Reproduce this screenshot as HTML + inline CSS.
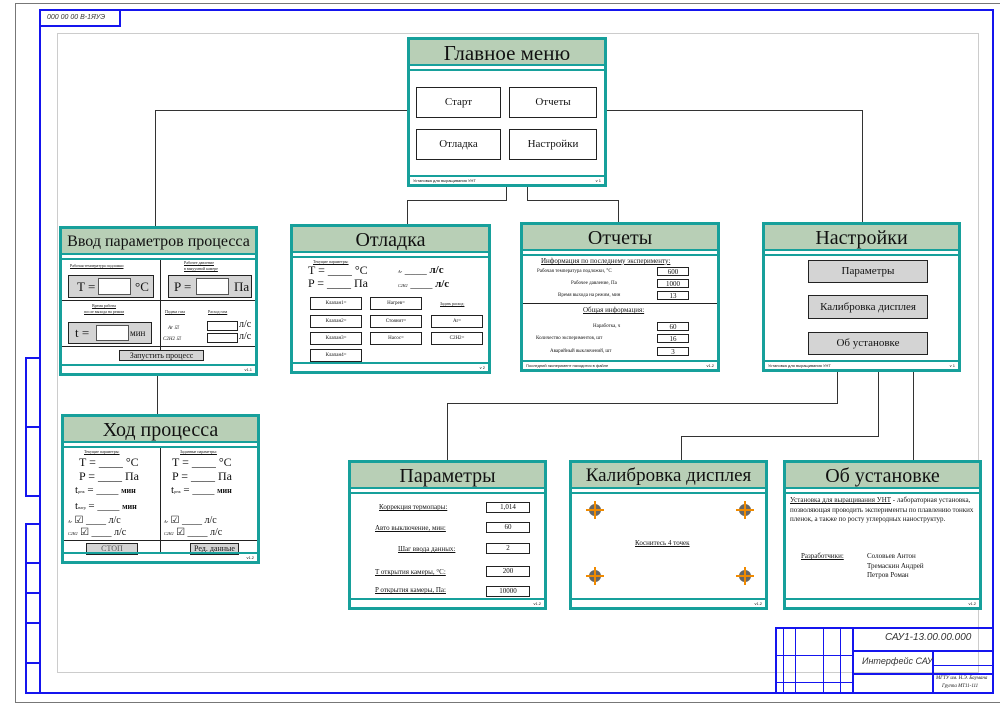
<!DOCTYPE html>
<html><head><meta charset="utf-8"><style>
*{margin:0;padding:0;box-sizing:border-box}
body{width:1000px;height:699px;background:#fff;position:relative;overflow:hidden;font-family:"Liberation Serif",serif;color:#111}
.a{position:absolute}
.p{position:absolute;border:3px solid #17a09b;background:#fff}
.p .h{position:absolute;left:0;right:0;top:0;height:26px;background:#b8cfb6;border-bottom:2px solid #17a09b;text-align:center;font-size:20px;line-height:26px;white-space:nowrap}
.p .h2{position:absolute;left:0;right:0;top:29px;height:2px;background:#17a09b}
.p .f{position:absolute;left:0;right:0;bottom:0;height:9px;border-top:2px solid #17a09b;font-size:4px;line-height:7px;padding:0 3px;font-family:"Liberation Sans",sans-serif}
.p .f span{float:right}
.b{position:absolute;border:1px solid #222;background:#fff;text-align:center;font-size:11px}
.g{background:#d4d4d4}
.t{position:absolute;font-size:6px;white-space:nowrap}
.u{text-decoration:underline}
.ln{position:absolute;background:#333}
.bl{position:absolute;border:2px solid #1515ee}
.fld{position:absolute;border:1px solid #222;background:#fff;font-size:7px;text-align:center;line-height:9px}
.dot{position:absolute;width:12px;height:12px;border-radius:6px;background:#666}
.dot:before{content:"";position:absolute;left:-3px;top:5px;width:18px;height:1.5px;background:#f08a00}
.dot:after{content:"";position:absolute;left:5px;top:-3px;width:1.5px;height:18px;background:#f08a00}
</style></head><body>
<div class="a" style="left:15px;top:3px;width:990px;height:700px;border:1px solid #777"></div>
<div class="bl" style="left:39px;top:9px;width:955px;height:685px"></div>
<div class="bl" style="left:39px;top:9px;width:82px;height:18px;font-size:7px;font-style:italic;padding-left:6px;line-height:13px;font-family:'Liberation Sans',sans-serif;color:#333">000 00 00 B-1ЯУЭ</div>
<div class="a" style="left:57px;top:33px;width:922px;height:640px;border:1px solid #ccc"></div>
<div class="bl" style="left:25px;top:357px;width:16px;height:71px"></div>
<div class="bl" style="left:25px;top:426px;width:16px;height:71px"></div>
<div class="bl" style="left:25px;top:523px;width:16px;height:41px"></div>
<div class="bl" style="left:25px;top:562px;width:16px;height:32px"></div>
<div class="bl" style="left:25px;top:592px;width:16px;height:32px"></div>
<div class="bl" style="left:25px;top:622px;width:16px;height:42px"></div>
<div class="bl" style="left:25px;top:662px;width:16px;height:32px"></div>
<div class="bl" style="left:775px;top:627px;width:219px;height:67px"></div>
<div class="ln" style="left:852px;top:627px;width:2px;height:67px;background:#1515ee"></div>
<div class="ln" style="left:852px;top:650px;width:142px;height:2px;background:#1515ee"></div>
<div class="ln" style="left:932px;top:650px;width:2px;height:44px;background:#1515ee"></div>
<div class="ln" style="left:852px;top:673px;width:142px;height:2px;background:#1515ee"></div>
<div class="ln" style="left:932px;top:665px;width:62px;height:1px;background:#1515ee"></div>
<div class="ln" style="left:775px;top:655px;width:78px;height:1px;background:#1515ee"></div>
<div class="ln" style="left:775px;top:682px;width:78px;height:1px;background:#1515ee"></div>
<div class="ln" style="left:783px;top:627px;width:1px;height:67px;background:#1515ee"></div>
<div class="ln" style="left:795px;top:627px;width:1px;height:67px;background:#1515ee"></div>
<div class="ln" style="left:823px;top:627px;width:1px;height:67px;background:#1515ee"></div>
<div class="ln" style="left:840px;top:627px;width:1px;height:67px;background:#1515ee"></div>
<div class="t" style="left:885px;top:632px;font-size:10px;font-style:italic;font-family:'Liberation Sans',sans-serif;color:#333">САУ1-13.00.00.000</div>
<div class="t" style="left:862px;top:656px;font-size:9px;font-style:italic;font-family:'Liberation Sans',sans-serif;color:#333">Интерфейс САУ</div>
<div class="t" style="left:936px;top:676px;font-size:5px;font-style:italic">МГТУ им. Н.Э. Баумана</div>
<div class="t" style="left:942px;top:684px;font-size:5px;font-style:italic">Группа МТ11-111</div>

<div class="ln" style="left:155px;top:110px;width:252px;height:1px"></div>
<div class="ln" style="left:155px;top:110px;width:1px;height:117px"></div>
<div class="ln" style="left:606px;top:110px;width:256px;height:1px"></div>
<div class="ln" style="left:862px;top:110px;width:1px;height:113px"></div>
<div class="ln" style="left:506px;top:186px;width:1px;height:14px"></div>
<div class="ln" style="left:407px;top:200px;width:100px;height:1px"></div>
<div class="ln" style="left:407px;top:200px;width:1px;height:25px"></div>
<div class="ln" style="left:527px;top:186px;width:1px;height:14px"></div>
<div class="ln" style="left:527px;top:200px;width:92px;height:1px"></div>
<div class="ln" style="left:618px;top:200px;width:1px;height:23px"></div>
<div class="ln" style="left:157px;top:375px;width:1px;height:40px"></div>
<div class="ln" style="left:837px;top:371px;width:1px;height:33px"></div>
<div class="ln" style="left:447px;top:403px;width:391px;height:1px"></div>
<div class="ln" style="left:447px;top:403px;width:1px;height:58px"></div>
<div class="ln" style="left:878px;top:371px;width:1px;height:66px"></div>
<div class="ln" style="left:681px;top:436px;width:198px;height:1px"></div>
<div class="ln" style="left:681px;top:436px;width:1px;height:25px"></div>
<div class="ln" style="left:913px;top:371px;width:1px;height:90px"></div>

<div class="p" style="left:407px;top:37px;width:200px;height:150px">
<div class="h" style="font-size:21px">Главное меню</div><div class="h2"></div>
<div class="b" style="left:6px;top:47px;width:85px;height:31px;line-height:29px">Старт</div>
<div class="b" style="left:99px;top:47px;width:88px;height:31px;line-height:29px">Отчеты</div>
<div class="b" style="left:6px;top:89px;width:85px;height:31px;line-height:29px">Отладка</div>
<div class="b" style="left:99px;top:89px;width:88px;height:31px;line-height:29px">Настройки</div>
<div class="f">Установка для выращивания УНТ<span>v 1</span></div>
</div>

<div class="p" style="left:59px;top:226px;width:199px;height:150px">
<div class="h" style="font-size:16px">Ввод параметров процесса</div><div class="h2"></div>
<div class="ln" style="left:98px;top:31px;width:1px;height:96px;background:#222"></div>
<div class="ln" style="left:0;top:71px;width:193px;height:1px;background:#222"></div>
<div class="ln" style="left:0;top:117px;width:193px;height:1px;background:#222"></div>
<div class="t u" style="left:8px;top:34px;font-size:4px">Рабочая температура подложки</div>
<div class="t u" style="left:122px;top:31px;font-size:4px;line-height:6px">Рабочее давление<br>в вакуумной камере</div>
<div class="b g" style="left:6px;top:46px;width:86px;height:23px;font-size:13px;line-height:21px;text-align:left;padding-left:8px">T =<span style="position:absolute;left:29px;top:2px;width:33px;height:17px;background:#fff;border:1px solid #555"></span><span style="position:absolute;left:66px">°C</span></div>
<div class="b g" style="left:106px;top:46px;width:84px;height:23px;font-size:13px;line-height:21px;text-align:left;padding-left:5px">P =<span style="position:absolute;left:27px;top:2px;width:33px;height:17px;background:#fff;border:1px solid #555"></span><span style="position:absolute;left:65px">Па</span></div>
<div class="t u" style="left:22px;top:74px;font-size:4px;text-align:center;line-height:6px">Время работы<br>после выхода на режим</div>
<div class="b g" style="left:6px;top:93px;width:84px;height:22px;font-size:13px;line-height:20px;text-align:left;padding-left:6px">t =<span style="position:absolute;left:27px;top:2px;width:33px;height:16px;background:#fff;border:1px solid #555"></span><span style="position:absolute;left:61px;font-size:9px">мин</span></div>
<div class="t u" style="left:103px;top:80px;font-size:4px">Подача газа</div>
<div class="t u" style="left:146px;top:80px;font-size:4px">Расход газа</div>
<div class="t" style="left:106px;top:96px;font-size:5px;font-style:italic">Ar ☑</div>
<div class="t" style="left:101px;top:107px;font-size:5px;font-style:italic">C2H2 ☑</div>
<div class="fld" style="left:145px;top:92px;width:31px;height:10px"></div>
<div class="fld" style="left:145px;top:104px;width:31px;height:10px"></div>
<div class="t" style="left:177px;top:90px;font-size:10px">л/с</div>
<div class="t" style="left:177px;top:102px;font-size:10px">л/с</div>
<div class="b g" style="left:57px;top:121px;width:85px;height:11px;font-size:8px;line-height:9px">Запустить процесс</div>
<div class="f"><span>v1.1</span></div>
</div>

<div class="p" style="left:61px;top:414px;width:199px;height:150px">
<div class="h">Ход процесса</div><div class="h2"></div>
<div class="ln" style="left:96px;top:31px;width:1px;height:106px;background:#222"></div>
<div class="ln" style="left:0;top:123px;width:193px;height:1px;background:#222"></div>
<div class="t u" style="left:20px;top:32px;font-size:4px">Текущие параметры:</div>
<div class="t u" style="left:116px;top:32px;font-size:4px">Заданные параметры:</div>
<div class="t" style="left:15px;top:38px;font-size:12px;line-height:14px">T = ____ °C<br>P = ____ Па</div>
<div class="t" style="left:108px;top:38px;font-size:12px;line-height:14px">T = ____ °C<br>P = ____ Па</div>
<div class="t" style="left:11px;top:67px;font-size:11px">t<span style="font-size:4px">реж</span> = ____ <b style="font-size:8px">мин</b></div>
<div class="t" style="left:11px;top:83px;font-size:11px">t<span style="font-size:4px">нагр</span> = ____ <b style="font-size:8px">мин</b></div>
<div class="t" style="left:107px;top:67px;font-size:11px">t<span style="font-size:4px">реж</span> = ____ <b style="font-size:8px">мин</b></div>
<div class="t" style="left:4px;top:98px;font-size:10px;line-height:11px"><i style="font-size:4px">Ar</i> ☑ ____ л/с<br><i style="font-size:4px">C2H2</i> ☑ ____ л/с</div>
<div class="t" style="left:100px;top:98px;font-size:10px;line-height:11px"><i style="font-size:4px">Ar</i> ☑ ____ л/с<br><i style="font-size:4px">C2H2</i> ☑ ____ л/с</div>
<div class="b g" style="left:22px;top:126px;width:52px;height:12px;font-size:8px;line-height:10px;color:#555">СТОП</div>
<div class="b g" style="left:126px;top:126px;width:49px;height:12px;font-size:8px;line-height:10px">Ред. данные</div>
<div class="f"><span>v1.2</span></div>
</div>

<div class="p" style="left:290px;top:224px;width:201px;height:150px">
<div class="h">Отладка</div><div class="h2"></div>
<div class="t u" style="left:20px;top:32px;font-size:4px">Текущие параметры:</div>
<div class="t" style="left:15px;top:37px;font-size:12px;line-height:13px">T = ____ °C<br>P = ____ Па</div>
<div class="t" style="left:105px;top:37px;font-size:11px;line-height:13px"><i style="font-size:4px">Ar</i> ____ <b>л/с</b><br><i style="font-size:4px">C2H2</i> ____ <b>л/с</b></div>
<div class="fld" style="left:17px;top:70px;width:52px;height:13px;font-size:5px;line-height:11px">Клапан1=</div>
<div class="fld" style="left:77px;top:70px;width:52px;height:13px;font-size:5px;line-height:11px">Нагрев=</div>
<div class="t u" style="left:147px;top:74px;font-size:4px">Задать расход:</div>
<div class="fld" style="left:17px;top:88px;width:52px;height:13px;font-size:5px;line-height:11px">Клапан2=</div>
<div class="fld" style="left:77px;top:88px;width:52px;height:13px;font-size:5px;line-height:11px">Стоянит=</div>
<div class="fld" style="left:138px;top:88px;width:52px;height:13px;font-size:5px;line-height:11px">Ar=</div>
<div class="fld" style="left:17px;top:105px;width:52px;height:13px;font-size:5px;line-height:11px">Клапан3=</div>
<div class="fld" style="left:77px;top:105px;width:52px;height:13px;font-size:5px;line-height:11px">Насос=</div>
<div class="fld" style="left:138px;top:105px;width:52px;height:13px;font-size:5px;line-height:11px">C2H2=</div>
<div class="fld" style="left:17px;top:122px;width:52px;height:13px;font-size:5px;line-height:11px">Клапан4=</div>
<div class="f"><span>v 2</span></div>
</div>

<div class="p" style="left:520px;top:222px;width:200px;height:150px">
<div class="h">Отчеты</div><div class="h2"></div>
<div class="t u" style="left:18px;top:32px;font-size:7px">Информация по последнему эксперименту:</div>
<div class="t" style="left:14px;top:44px;font-size:5px">Рабочая температура подложки, °C</div>
<div class="t" style="left:48px;top:56px;font-size:5px">Рабочее давление, Па</div>
<div class="t" style="left:35px;top:68px;font-size:5px">Время выхода на режим, мин</div>
<div class="fld" style="left:134px;top:42px;width:32px;height:9px">600</div>
<div class="fld" style="left:134px;top:54px;width:32px;height:9px">1000</div>
<div class="fld" style="left:134px;top:66px;width:32px;height:9px">13</div>
<div class="ln" style="left:0;top:78px;width:194px;height:1px;background:#222"></div>
<div class="t u" style="left:60px;top:81px;font-size:7px">Общая информация:</div>
<div class="t" style="left:70px;top:99px;font-size:5px">Наработка, ч</div>
<div class="t" style="left:13px;top:111px;font-size:5px">Количество экспериментов, шт</div>
<div class="t" style="left:27px;top:124px;font-size:5px">Аварийный выключений, шт</div>
<div class="fld" style="left:134px;top:97px;width:32px;height:9px">60</div>
<div class="fld" style="left:134px;top:109px;width:32px;height:9px">16</div>
<div class="fld" style="left:134px;top:122px;width:32px;height:9px">3</div>
<div class="f">Последний эксперимент находится в файле<span>v1.2</span></div>
</div>

<div class="p" style="left:762px;top:222px;width:199px;height:150px">
<div class="h">Настройки</div><div class="h2"></div>
<div class="b g" style="left:43px;top:35px;width:120px;height:23px;line-height:21px">Параметры</div>
<div class="b g" style="left:43px;top:70px;width:120px;height:24px;line-height:22px">Калибровка дисплея</div>
<div class="b g" style="left:43px;top:107px;width:120px;height:23px;line-height:21px">Об установке</div>
<div class="f">Установка для выращивания УНТ<span>v 1</span></div>
</div>

<div class="p" style="left:348px;top:460px;width:199px;height:150px">
<div class="h">Параметры</div><div class="h2"></div>
<div class="t u" style="left:28px;top:40px;font-size:7px">Коррекция термопары:</div>
<div class="t u" style="left:24px;top:61px;font-size:7px">Авто выключение, мин:</div>
<div class="t u" style="left:47px;top:82px;font-size:7px">Шаг ввода данных:</div>
<div class="t u" style="left:24px;top:105px;font-size:7px">T открытия камеры, °C:</div>
<div class="t u" style="left:24px;top:123px;font-size:7px">P открытия камеры, Па:</div>
<div class="fld" style="left:135px;top:39px;width:44px;height:11px">1,014</div>
<div class="fld" style="left:135px;top:59px;width:44px;height:11px">60</div>
<div class="fld" style="left:135px;top:80px;width:44px;height:11px">2</div>
<div class="fld" style="left:135px;top:103px;width:44px;height:11px">200</div>
<div class="fld" style="left:135px;top:123px;width:44px;height:11px">10000</div>
<div class="f"><span>v1.2</span></div>
</div>

<div class="p" style="left:569px;top:460px;width:199px;height:150px">
<div class="h" style="font-size:19px">Калибровка дисплея</div><div class="h2"></div>
<div class="dot" style="left:17px;top:41px"></div>
<div class="dot" style="left:167px;top:41px"></div>
<div class="dot" style="left:17px;top:107px"></div>
<div class="dot" style="left:167px;top:107px"></div>
<div class="t u" style="left:63px;top:76px;font-size:7px">Коснитесь 4 точек</div>
<div class="f"><span>v1.2</span></div>
</div>

<div class="p" style="left:783px;top:460px;width:199px;height:150px">
<div class="h">Об установке</div><div class="h2"></div>
<div class="t" style="left:4px;top:33px;font-size:7px;line-height:9.5px;white-space:normal;width:190px"><span class="u">Установка для выращивания УНТ</span> - лабораторная установка, позволяющая проводить эксперименты по плавлению тонких пленок, а также по росту углеродных наноструктур.</div>
<div class="t u" style="left:15px;top:89px;font-size:7px">Разработчики:</div>
<div class="t" style="left:81px;top:89px;font-size:7px;line-height:9.5px">Соловьев Антон<br>Тремаскин Андрей<br>Петров Роман</div>
<div class="f"><span>v1.2</span></div>
</div>
</body></html>
